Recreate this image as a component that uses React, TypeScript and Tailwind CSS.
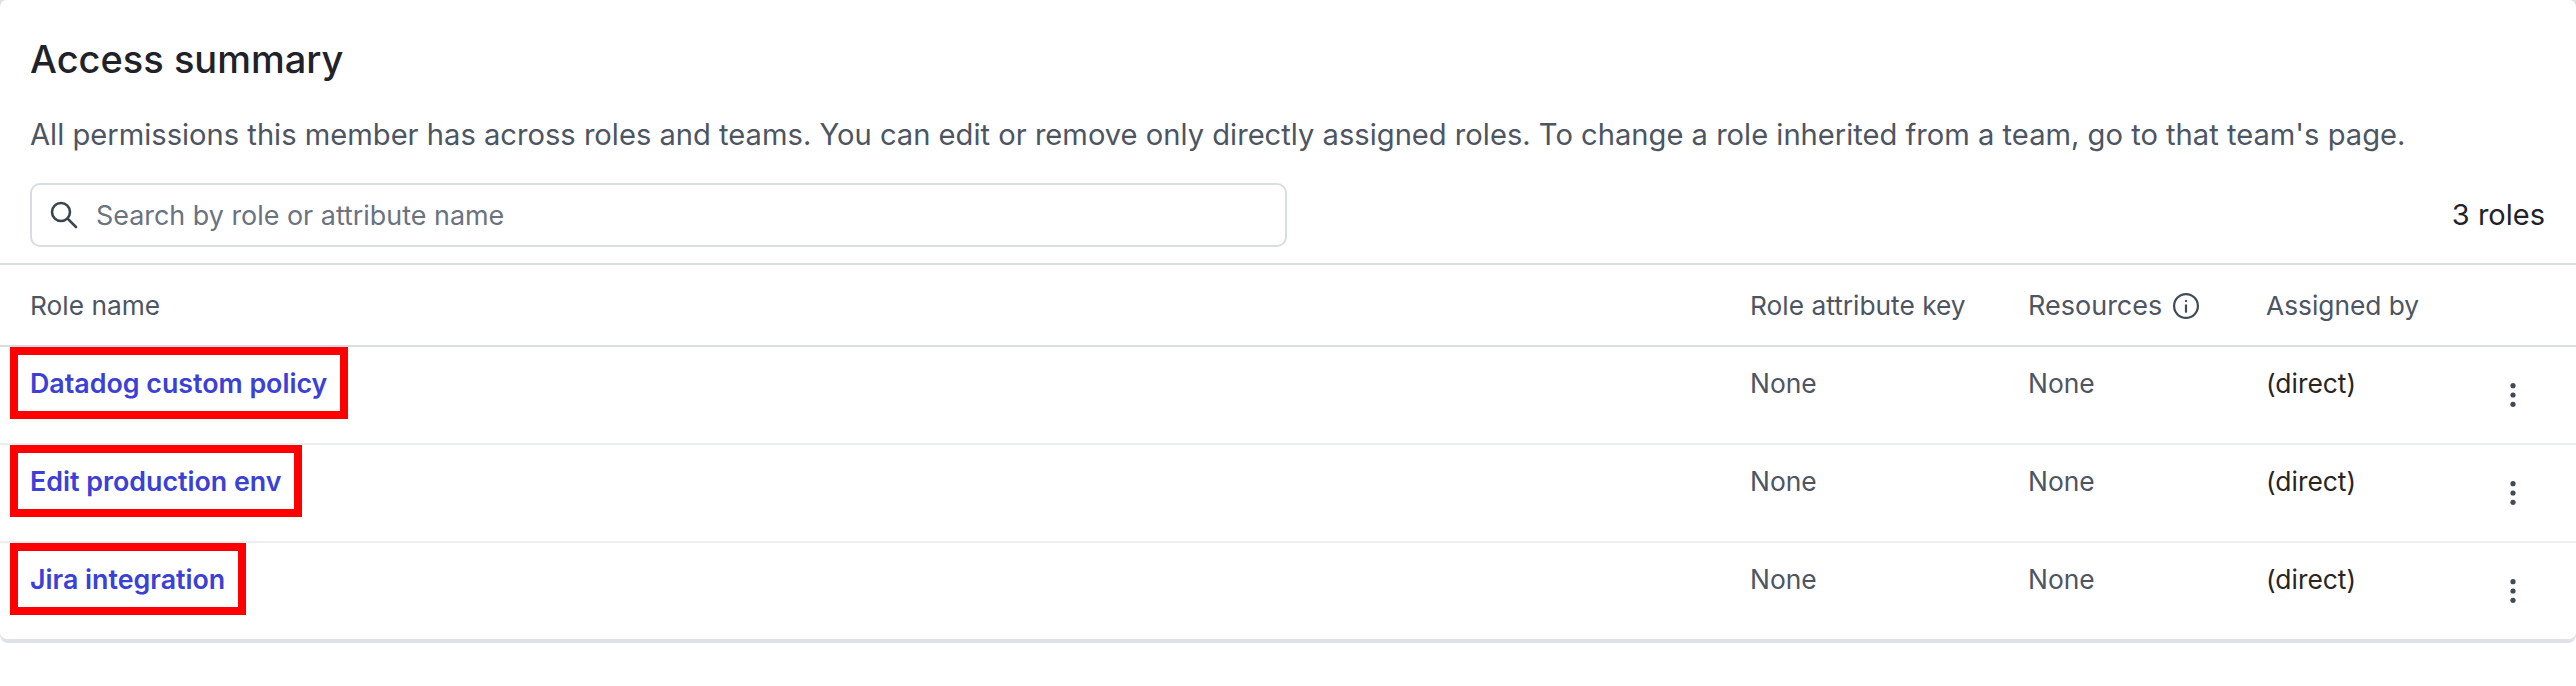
import React from "react";

const rows = ["Datadog custom policy", "Edit production env", "Jira integration"];

function Kebab() {
  return (
    <svg width="12" height="26" viewBox="0 0 12 26" className="block">
      <circle cx="6" cy="3.7" r="2.6" fill="#414b58" />
      <circle cx="6" cy="13" r="2.6" fill="#414b58" />
      <circle cx="6" cy="22.3" r="2.6" fill="#414b58" />
    </svg>
  );
}

export default function App() {
  return (
    <div className="w-[2576px] h-[686px] bg-white font-['Inter',sans-serif] text-[24px] leading-[32px] overflow-hidden">
      <div className="h-[643px] rounded-b-[8px] bg-[#dfe2e8]">
        <div className="h-[639px] rounded-[7px] bg-white">
          <div className="pl-[30px] pr-[31px] pt-[35px]">
            <h2 className="text-[38px] leading-[48px] text-[#1f2329] font-medium">Access summary</h2>
            <p className="mt-[32px] text-[#4d5562] text-[29.15px] leading-[40px]">
              All permissions this member has across roles and teams. You can edit or remove only directly assigned roles. To change a role inherited from a team, go to that team's page.
            </p>
            <div className="mt-[28px] flex items-center justify-between">
              <div className="w-[1257px] h-[64px] rounded-[10px] border-[2px] border-[#d8dce3] flex items-center pl-[18px] gap-[18px]">
                <svg width="28" height="28" viewBox="0 0 28 28" fill="none" stroke="#3c4450" strokeWidth="2.6" strokeLinecap="round">
                  <circle cx="11" cy="11" r="9" />
                  <path d="M17.6 17.6l8.4 8.4" />
                </svg>
                <span className="text-[#6b7280] text-[26.9px]">Search by role or attribute name</span>
              </div>
              <span className="text-[#1f2329] text-[29px]">3 roles</span>
            </div>
          </div>
          <div className="mt-[16px] border-t-[2px] border-[#d8dce3]">
            <div className="grid grid-cols-[1720px_278px_238px_1fr] pl-[30px] pt-[2px] h-[82px] items-center border-b-[2px] border-[#d8dce3] text-[#4d5562] text-[26.3px]">
              <span>Role name</span>
              <span>Role attribute key</span>
              <span className="flex items-center gap-[10px] text-[27px]">
                Resources
                <svg width="28" height="28" viewBox="0 0 24 24" fill="none" stroke="#414b58" strokeWidth="1.9" strokeLinecap="round">
                  <circle cx="12" cy="12" r="10.2" />
                  <path d="M12 11.5v5.5" />
                  <path d="M12 7.6v.2" />
                </svg>
              </span>
              <span>Assigned by</span>
            </div>
            {rows.map((name, i) => (
              <div key={name} className={`grid grid-cols-[1720px_278px_238px_1fr] pl-[30px] pt-[20px] text-[26.4px] ${i < 2 ? "h-[98px] border-b-[2px] border-[#eceef2]" : "h-[96px]"}`}>
                <span>
                  <a className="relative inline-block font-semibold text-[26.8px] text-[#3b40d6]">
                    {name}
                    <span className="absolute -left-[20px] -right-[21px] -top-[20px] -bottom-[20px] border-[8px] border-[#ff0000]" />
                  </a>
                </span>
                <span className="text-[#4d5562]">None</span>
                <span className="text-[#4d5562]">None</span>
                <span className="relative text-[#2a2520]">
                  (direct)
                  <span className="absolute left-[241px] top-[15px]">
                    <Kebab />
                  </span>
                </span>
              </div>
            ))}
          </div>
        </div>
      </div>
    </div>
  );
}
